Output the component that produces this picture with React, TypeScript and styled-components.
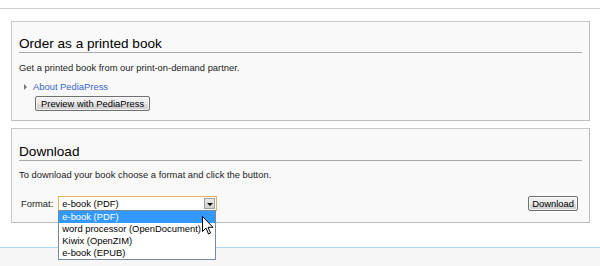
import styled, { createGlobalStyle } from 'styled-components'

const GlobalStyle = createGlobalStyle`
  html, body {
    margin: 0;
    padding: 0;
    background: #fff;
  }
  body {
    font-family: "Liberation Sans", Arial, sans-serif;
    color: #222;
    width: 600px;
    height: 266px;
    overflow: hidden;
  }
`

const TopBar = styled.div`
  height: 8px;
  border-bottom: 1px solid #d2d2d2;
`

const Content = styled.div`
  padding: 12px 10px 0 11px;
  display: flex;
  flex-direction: column;
  gap: 7px;
`

const Section = styled.div<{ $bottom: number }>`
  background: #f9f9f9;
  border: 1px solid #c9c9c9;
  border-right-color: #bdbdbd;
  border-bottom-color: #bdbdbd;
  padding: 0 7px ${(p) => p.$bottom}px 7px;
  position: relative;
`

const Heading = styled.h2<{ $top: number }>`
  margin: 0;
  padding-top: ${(p) => p.$top}px;
  font-size: 13.6px;
  font-weight: normal;
  line-height: 17px;
  color: #000;
  border-bottom: 1px solid #aaa;
`

const Para = styled.p<{ $top: number }>`
  margin: ${(p) => p.$top}px 0 0;
  font-size: 9.4px;
  line-height: 12px;
`

const Toggle = styled.div`
  margin-top: 7px;
  display: flex;
  align-items: center;
  padding-left: 5px;
  height: 12px;
  font-size: 9.4px;
  line-height: 12px;
`

const Arrow = styled.span`
  width: 0;
  height: 0;
  border-top: 3px solid transparent;
  border-bottom: 3px solid transparent;
  border-left: 3px solid #777;
  margin-right: 6px;
`

const Link = styled.a`
  color: #3366cc;
  text-decoration: none;
`

const Button = styled.button`
  font-family: "Liberation Sans", Arial, sans-serif;
  font-size: 9.4px;
  color: #000;
  height: 15px;
  padding: 0 5px;
  line-height: 13px;
  border: 1px solid #707070;
  border-radius: 2px;
  background: linear-gradient(#f2f2f2 0%, #ebebeb 50%, #dddddd 51%, #cfcfcf 100%);
  box-shadow: inset 0 0 0 1px rgba(255, 255, 255, 0.7);
`

const PreviewButton = styled(Button)`
  margin: 3px 0 0 16px;
  align-self: flex-start;
`

const Column = styled.div`
  display: flex;
  flex-direction: column;
`

const FormatRow = styled.div`
  margin-top: 15px;
  display: flex;
  align-items: center;
  height: 15px;
`

const Label = styled.label`
  font-size: 9.4px;
  margin: 0 5px 0 2px;
  color: #222;
`

const SelectWrap = styled.div`
  position: relative;
  width: 159px;
`

const SelectBox = styled.div`
  box-sizing: border-box;
  height: 15px;
  border: 1px solid #e2b25f;
  background: #fff;
  display: flex;
  align-items: center;
  font-size: 9.4px;
  padding-left: 3px;
  color: #000;
`

const SelectValue = styled.span`
  flex: 1;
`

const DropButton = styled.span`
  width: 11px;
  height: 11px;
  margin-right: 1px;
  background: linear-gradient(#e9e9e9, #cfcfcf);
  border: 1px solid #a0a0a0;
  box-sizing: border-box;
  display: flex;
  align-items: center;
  justify-content: center;
`

const DropTriangle = styled.span`
  width: 0;
  height: 0;
  border-left: 3px solid transparent;
  border-right: 3px solid transparent;
  border-top: 3px solid #000;
  margin-top: 1px;
`

const OptionList = styled.ul`
  position: absolute;
  top: 14px;
  left: 0;
  width: 158px;
  box-sizing: border-box;
  margin: 0;
  padding: 0;
  list-style: none;
  background: #fff;
  border: 1px solid #7a8a9e;
  z-index: 5;
`

const Option = styled.li<{ $active?: boolean }>`
  height: 12px;
  line-height: 12px;
  font-size: 9.4px;
  padding-left: 3px;
  color: ${(p) => (p.$active ? '#fff' : '#000')};
  background: ${(p) => (p.$active ? '#3399ff' : 'transparent')};
`

const Cursor = styled.svg`
  position: absolute;
  left: 143px;
  top: 5px;
  z-index: 6;
`

const Spacer = styled.div`
  flex: 1;
`

const DownloadButton = styled(Button)`
  padding: 0 3px;
  margin-right: 4px;
`

const Footer = styled.div`
  margin-top: 24px;
  border-top: 1px solid #a7d7f9;
  background: #f6f6f6;
  height: 30px;
`

const formats = ['e-book (PDF)', 'word processor (OpenDocument)', 'Kiwix (OpenZIM)', 'e-book (EPUB)']

export default function App() {
  return (
    <>
      <GlobalStyle />
      <TopBar />
      <Content>
        <Section $bottom={9}>
          <Column>
            <Heading $top={13}>Order as a printed book</Heading>
            <Para $top={9}>Get a printed book from our print-on-demand partner.</Para>
            <Toggle>
              <Arrow />
              <Link href="#">About PediaPress</Link>
            </Toggle>
            <PreviewButton>Preview with PediaPress</PreviewButton>
          </Column>
        </Section>
        <Section $bottom={11}>
          <Heading $top={14}>Download</Heading>
          <Para $top={8}>To download your book choose a format and click the button.</Para>
          <FormatRow>
            <Label>Format:</Label>
            <SelectWrap>
              <SelectBox>
                <SelectValue>e-book (PDF)</SelectValue>
                <DropButton>
                  <DropTriangle />
                </DropButton>
              </SelectBox>
              <OptionList>
                {formats.map((f, i) => (
                  <Option key={f} $active={i === 0}>
                    {f}
                  </Option>
                ))}
                <Cursor width="12" height="19" viewBox="0 0 12 19">
                  <path d="M0.5 0.5 L0.5 15.5 L4 12 L6.5 18 L8.5 17 L6 11.3 L11 11.3 Z" fill="#fff" stroke="#000" strokeWidth="1" strokeLinejoin="round" />
                </Cursor>
              </OptionList>
            </SelectWrap>
            <Spacer />
            <DownloadButton>Download</DownloadButton>
          </FormatRow>
        </Section>
      </Content>
      <Footer />
    </>
  )
}
